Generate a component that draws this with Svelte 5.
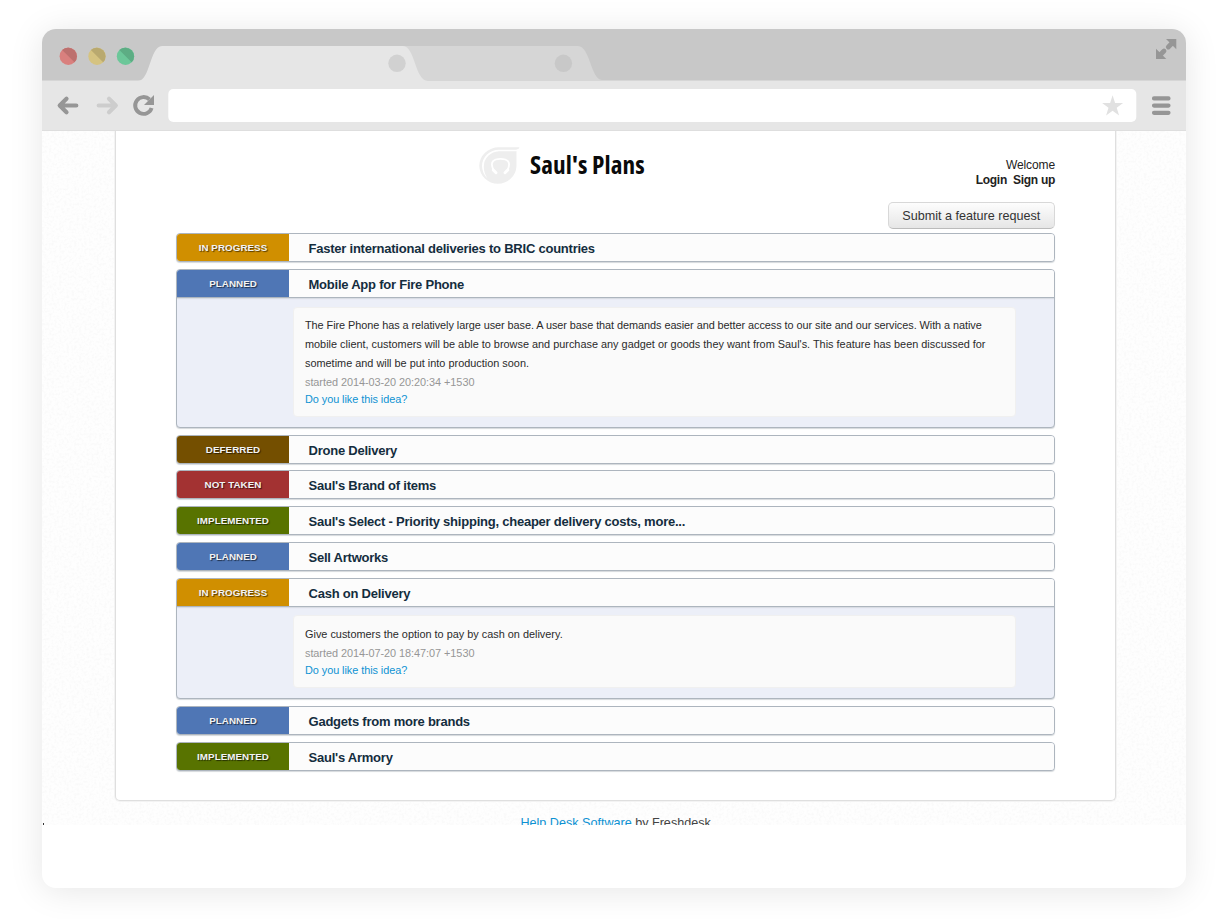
<script>
  const plans = [
    { status: 'In progress', tone: 'progress', title: 'Faster international deliveries to BRIC countries' },
    {
      status: 'Planned', tone: 'planned', title: 'Mobile App for Fire Phone', size: 'tall',
      lines: [
        'The Fire Phone has a relatively large user base. A user base that demands easier and better access to our site and our services. With a native',
        "mobile client, customers will be able to browse and purchase any gadget or goods they want from Saul's. This feature has been discussed for",
        'sometime and will be put into production soon.'
      ],
      started: 'started 2014-03-20 20:20:34 +1530'
    },
    { status: 'Deferred', tone: 'deferred', title: 'Drone Delivery' },
    { status: 'Not taken', tone: 'rejected', title: "Saul's Brand of items" },
    { status: 'Implemented', tone: 'done', title: "Saul's Select - Priority shipping, cheaper delivery costs, more..." },
    { status: 'Planned', tone: 'planned', title: 'Sell Artworks' },
    {
      status: 'In progress', tone: 'progress', title: 'Cash on Delivery', size: 'short',
      lines: ['Give customers the option to pay by cash on delivery.'],
      started: 'started 2014-07-20 18:47:07 +1530'
    },
    { status: 'Planned', tone: 'planned', title: 'Gadgets from more brands' },
    { status: 'Implemented', tone: 'done', title: "Saul's Armory" }
  ];
</script>

<div class="window">
  <svg class="chrome" width="1144" height="102" viewBox="42 29 1144 102" aria-hidden="true">
    <rect x="42" y="29" width="1144" height="52" fill="#c8c8c8" />
    <path d="M400 46H578C590 46 591 80 602 80H400Z" fill="#d6d6d6" />
    <path d="M42 80.5H1186" stroke="#d6d6d6" />
    <path d="M138 81C150 81 150 46 162 46H403C415 46 415 81 428 81Z" fill="#e6e6e6" />
    <rect x="42" y="81" width="1144" height="50" fill="#e6e6e6" />
    <path d="M42 130.5H1186" stroke="#dedede" />
    <g>
      <circle cx="68.3" cy="56.2" r="8.7" fill="#d9807e" />
      <path d="M62.15 50.05A8.7 8.7 0 0 1 74.45 62.35Z" fill="#bd706e" />
      <circle cx="97" cy="56.2" r="8.7" fill="#d5c381" />
      <path d="M90.85 50.05A8.7 8.7 0 0 1 103.15 62.35Z" fill="#b9a96f" />
      <circle cx="125.5" cy="56.2" r="8.7" fill="#6cc799" />
      <path d="M119.35 50.05A8.7 8.7 0 0 1 131.65 62.35Z" fill="#5dad84" />
    </g>
    <circle cx="397" cy="63.3" r="8.7" fill="#d1d1d1" />
    <circle cx="563.4" cy="63.3" r="8.7" fill="#c8c8c8" />
    <path d="M76.3 105.5H60.5M66.5 98.7L59.7 105.5L66.5 112.3" fill="none" stroke="#969696" stroke-width="4.2" stroke-linecap="round" stroke-linejoin="round" />
    <path d="M98.7 105.5H115M109 98.7L115.8 105.5L109 112.3" fill="none" stroke="#cdcdcd" stroke-width="4.2" stroke-linecap="round" stroke-linejoin="round" />
    <path d="M151.6 108A8.4 8.4 0 1 1 149.5 99.5" fill="none" stroke="#969696" stroke-width="3.9" />
    <path d="M154 95V105H144Z" fill="#969696" />
    <rect x="168.3" y="89" width="968" height="33" rx="5" fill="#fff" />
    <path d="M1112.6 95.2L1115.1 102.9H1123.1L1116.7 107.7L1119.1 115.4L1112.6 110.7L1106.1 115.4L1108.5 107.7L1102.1 102.9H1110.1Z" fill="#e1e1e1" />
    <path d="M1154 98.4H1168.5M1154 105.6H1168.5M1154 112.8H1168.5" stroke="#969696" stroke-width="4.2" stroke-linecap="round" />
    <path d="M1166 39H1176.3V49.3ZM1156 48.7V59H1166.3Z" fill="#969696" />
    <path d="M1168.3 47L1172.5 42.8M1164 51L1159.8 55.2" stroke="#969696" stroke-width="4.8" stroke-linecap="round" />
  </svg>

  <main class="viewport">
    <svg class="grain" width="1144" height="694" aria-hidden="true">
      <filter id="grain" x="0" y="0" width="100%" height="100%">
        <feTurbulence type="fractalNoise" baseFrequency="0.4" numOctaves="2" seed="4" />
        <feColorMatrix values="0.07 0 0 0 0.945  0.07 0 0 0 0.945  0.07 0 0 0 0.945  0 0 0 0 1" color-interpolation-filters="sRGB" />
      </filter>
      <rect width="1144" height="694" fill="#fafafa" />
      <rect width="1144" height="694" filter="url(#grain)" opacity=".8" />
    </svg>

    <section class="page">
      <header>
        <div class="brand">
          <svg width="42" height="40" viewBox="478 145 42 40" aria-hidden="true">
            <path d="M519.5 147.3H499A19.5 18.5 0 0 0 479.3 166A18.5 18 0 0 0 498 183.7A18.5 18.5 0 0 0 516.5 166V149.5Q518.8 149.5 519.5 147.3Z" fill="#eee" />
            <path d="M519 149.7H499A16.8 16.3 0 0 0 482 166Q482 173 487.5 178.5Q483.8 173 483.8 166.5A15.8 15.5 0 0 1 499 151.2H516.5Z" fill="#fff" />
            <path d="M493.5 170C489.5 162 493.5 158.8 500.5 158.8C507.5 158.8 511.5 162 507.5 170" fill="none" stroke="#fff" stroke-width="1.8" />
            <path d="M493.3 170L496 172.7M507.7 170L505 172.7" stroke="#fff" stroke-width="3" stroke-linecap="round" />
          </svg>
          <h1>Saul's Plans</h1>
        </div>
        <div class="account">
          <span>Welcome</span>
          <div><b>Login</b><b>Sign up</b></div>
        </div>
      </header>

      <div class="actions"><button>Submit a feature request</button></div>

      <div class="plans">
        {#each plans as plan}
          <article class={plan.size ?? ''}>
            <div class="head">
              <span class="status {plan.tone}">{plan.status}</span>
              <h2>{plan.title}</h2>
            </div>
            {#if plan.lines}
              <div class="body">
                <div class="note">
                  {#each plan.lines as line}<p>{line}</p>{/each}
                  <time>{plan.started}</time>
                  <span class="link">Do you like this idea?</span>
                </div>
              </div>
            {/if}
          </article>
        {/each}
      </div>
    </section>

    <footer><span class="link">Help Desk Software</span> by Freshdesk</footer>
    <i class="speck"></i>
  </main>
</div>

<style>
  :global(body) {
    background: #fff;
    overflow: hidden;
  }
  :global(#app) {
    display: flow-root;
    height: 919px;
    overflow: hidden;
  }
  .window {
    width: 1144px;
    height: 859px;
    margin: 29px 0 0 42px;
    border-radius: 14px;
    overflow: hidden;
    background: #fff;
    box-shadow: 0 3px 34px rgba(0, 0, 0, 0.1);
    font-family: 'Liberation Sans', Arial, sans-serif;
    color: #333;
  }
  .chrome {
    display: block;
  }
  .viewport {
    position: relative;
    height: 694px;
    overflow: hidden;
  }
  .grain {
    position: absolute;
    inset: 0;
  }
  .page {
    position: relative;
    box-sizing: border-box;
    width: 1001px;
    height: 670px;
    margin-left: 73px;
    padding: 0 60px;
    background: #fff;
    border: 1px solid #dfdfdf;
    border-width: 0 1px 1px;
    border-radius: 0 0 5px 5px;
    box-shadow: 0 0 0 1px #f3f3f3;
  }
  header {
    display: flex;
    justify-content: space-between;
    height: 71px;
    padding-left: 302px;
  }
  .brand {
    display: flex;
    gap: 10px;
    padding-top: 14px;
  }
  h1 {
    margin: -1px 0 0;
    font: 700 25.2px/40px 'Open Sans', sans-serif;
    font-stretch: 75%;
    letter-spacing: 0.12px;
    color: #0a0a0a;
    white-space: nowrap;
  }
  .account {
    padding-top: 26px;
    font-size: 12px;
    line-height: 16px;
    text-align: right;
    color: #222;
  }
  .account span {
    letter-spacing: -0.1px;
  }
  .account div {
    display: flex;
    gap: 6px;
    margin-top: -1px;
    letter-spacing: -0.28px;
  }
  .actions {
    display: flex;
    justify-content: flex-end;
    height: 31.4px;
  }
  button {
    width: 167.5px;
    height: 27px;
    padding: 0;
    border: 1px solid #d8d8d8;
    border-bottom-color: #bbb;
    border-radius: 5px;
    background: linear-gradient(#fdfdfd, #e6e6e6);
    font: 12.6px 'Liberation Sans', Arial, sans-serif;
    color: #333;
    white-space: nowrap;
  }
  .plans {
    display: flex;
    flex-direction: column;
    gap: 6.75px;
  }
  article {
    box-sizing: border-box;
    height: 29px;
    border: 1px solid #adb5be;
    border-radius: 4px;
    overflow: hidden;
    background: #eceff8;
    box-shadow: 0 1px 1px #d5d9dc;
  }
  .tall {
    height: 158.8px;
  }
  .short {
    height: 121.4px;
  }
  .head {
    display: flex;
    height: 27px;
    background: #fcfcfc;
  }
  .tall .head,
  .short .head {
    border-bottom: 1px solid #adb5be;
    box-shadow: 0 1px 1px #d9dde4;
  }
  .status {
    width: 112px;
    font-size: 9.8px;
    font-weight: 700;
    line-height: 27px;
    letter-spacing: 0.05px;
    text-align: center;
    text-transform: uppercase;
    text-shadow: 1px 1px 1px rgba(0, 0, 0, 0.6);
    color: #f3f3f3;
    white-space: nowrap;
  }
  .progress { background: #d08f00; }
  .planned { background: #4f76b5; }
  .deferred { background: #744f00; }
  .rejected { background: #a33232; }
  .done { background: #587300; }
  h2 {
    margin: 0 0 0 19.5px;
    font-size: 13px;
    line-height: 29px;
    letter-spacing: -0.23px;
    color: #142d3e;
    white-space: nowrap;
  }
  .body {
    padding: 8.6px 38px 10px 116.4px;
  }
  .note {
    display: flex;
    flex-direction: column;
    box-sizing: border-box;
    height: 110.5px;
    padding: 8.4px 0 0 10.6px;
    border: 1px solid #f0f0f0;
    border-radius: 4px;
    background: #fafafa;
    font-size: 10.9px;
    line-height: 18.8px;
    white-space: nowrap;
  }
  .short .note {
    height: 73px;
  }
  p {
    margin: 0;
    color: #2b2b2b;
  }
  .tall p:first-child {
    letter-spacing: -0.06px;
  }
  time {
    line-height: 18px;
    letter-spacing: -0.05px;
    color: #969696;
  }
  .short time {
    padding-top: 0.5px;
  }
  .note .link {
    line-height: 17px;
    letter-spacing: -0.06px;
  }
  .link {
    color: #0e92d3;
  }
  footer {
    position: relative;
    padding: 14px 0 0 478.4px;
    font-size: 12.6px;
    line-height: 16px;
    color: #444;
    white-space: nowrap;
  }
  .speck {
    position: absolute;
    left: 1px;
    bottom: 0;
    width: 1px;
    height: 2px;
    background: #333;
  }
</style>
